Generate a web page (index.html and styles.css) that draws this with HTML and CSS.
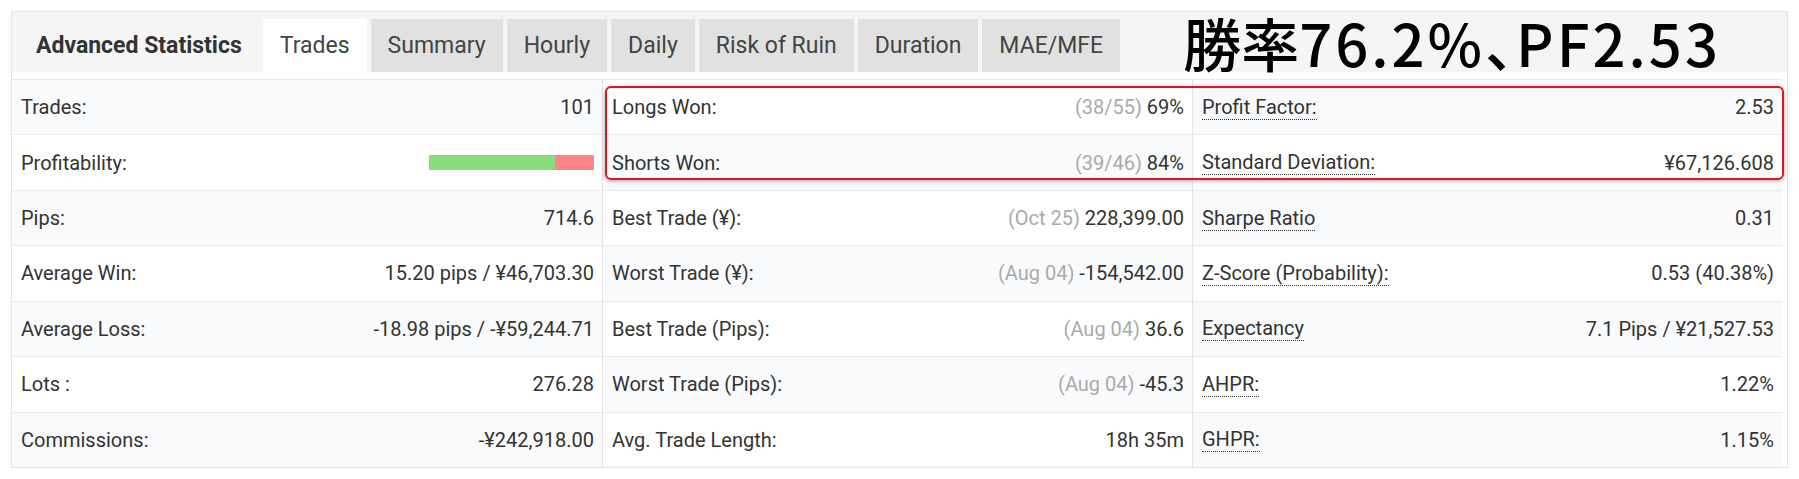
FILE: index.html
```html
<!DOCTYPE html>
<html lang="ja">
<head>
<meta charset="utf-8">
<title>Advanced Statistics</title>
<link rel="stylesheet" href="styles.css">
</head>
<body>
<div class="panel">
  <div class="header">
    <div class="title">Advanced Statistics</div>
    <div class="tabs">
      <div class="tab active">Trades</div>
      <div class="tab">Summary</div>
      <div class="tab">Hourly</div>
      <div class="tab">Daily</div>
      <div class="tab">Risk of Ruin</div>
      <div class="tab">Duration</div>
      <div class="tab">MAE/MFE</div>
    </div>
    <div class="annot">勝率<span class="latin">76.2%</span><span class="punct">、</span><span class="latin">PF2.53</span></div>
  </div>
  <div class="body">
    <div class="col col-a">
      <div class="row"><span class="lbl">Trades:</span><span class="val">101</span></div>
      <div class="row"><span class="lbl">Profitability:</span><span class="bar"><span class="win" style="width:76.2%"></span><span class="loss"></span></span></div>
      <div class="row"><span class="lbl">Pips:</span><span class="val">714.6</span></div>
      <div class="row"><span class="lbl">Average Win:</span><span class="val">15.20 pips / ¥46,703.30</span></div>
      <div class="row"><span class="lbl">Average Loss:</span><span class="val">-18.98 pips / -¥59,244.71</span></div>
      <div class="row"><span class="lbl">Lots :</span><span class="val">276.28</span></div>
      <div class="row"><span class="lbl">Commissions:</span><span class="val">-¥242,918.00</span></div>
    </div>
    <div class="col col-b">
      <div class="row"><span class="lbl">Longs Won:</span><span class="val"><span class="muted">(38/55)</span> 69%</span></div>
      <div class="row"><span class="lbl">Shorts Won:</span><span class="val"><span class="muted">(39/46)</span> 84%</span></div>
      <div class="row"><span class="lbl">Best Trade (¥):</span><span class="val"><span class="muted">(Oct 25)</span> 228,399.00</span></div>
      <div class="row"><span class="lbl">Worst Trade (¥):</span><span class="val"><span class="muted">(Aug 04)</span> -154,542.00</span></div>
      <div class="row"><span class="lbl">Best Trade (Pips):</span><span class="val"><span class="muted">(Aug 04)</span> 36.6</span></div>
      <div class="row"><span class="lbl">Worst Trade (Pips):</span><span class="val"><span class="muted">(Aug 04)</span> -45.3</span></div>
      <div class="row"><span class="lbl">Avg. Trade Length:</span><span class="val">18h 35m</span></div>
    </div>
    <div class="col col-c">
      <div class="row"><span class="lbl dotted">Profit Factor:</span><span class="val">2.53</span></div>
      <div class="row"><span class="lbl dotted">Standard Deviation:</span><span class="val">¥67,126.608</span></div>
      <div class="row"><span class="lbl dotted">Sharpe Ratio</span><span class="val">0.31</span></div>
      <div class="row"><span class="lbl dotted">Z-Score (Probability):</span><span class="val">0.53 (40.38%)</span></div>
      <div class="row"><span class="lbl dotted">Expectancy</span><span class="val">7.1 Pips / ¥21,527.53</span></div>
      <div class="row"><span class="lbl dotted">AHPR:</span><span class="val">1.22%</span></div>
      <div class="row"><span class="lbl dotted">GHPR:</span><span class="val">1.15%</span></div>
    </div>
    <div class="highlight"></div>
  </div>
</div>
</body>
</html>
```
FILE: styles.css
```css
html, body {
  margin: 0;
  padding: 0;
  background: #ffffff;
}

body {
  font-family: Roboto, "Liberation Sans", sans-serif;
  color: #333333;
}

.panel {
  margin: 11px 11px 0 11px;
  border: 1px solid #e4e4e4;
  background: #ffffff;
}

.header {
  display: flex;
  align-items: flex-end;
  height: 60px;
  background: #f5f5f5;
  padding-left: 24px;
}

.title {
  height: 53px;
  line-height: 53px;
  font-size: 23px;
  font-weight: 700;
  color: #333333;
  margin-right: 21px;
  white-space: nowrap;
}

.tabs {
  display: flex;
  gap: 4px;
}

.tab {
  height: 53px;
  line-height: 53px;
  padding: 0 17px;
  font-size: 23px;
  color: #444444;
  background: #e1e1e1;
  white-space: nowrap;
}

.tab.active {
  background: #ffffff;
}

.annot {
  margin-left: auto;
  margin-right: 66px;
  align-self: center;
  font-family: "Noto Sans CJK JP", "Noto Sans", sans-serif;
  font-size: 58px;
  font-weight: 500;
  line-height: 1;
  color: #000000;
  white-space: nowrap;
}

.annot .latin {
  letter-spacing: 3px;
}

.annot .punct {
  font-feature-settings: "halt";
  margin-right: 2px;
}

.body {
  position: relative;
  padding: 7px 5px 0 0;
  display: grid;
  grid-template-columns: 1fr 1fr 1fr;
}

.col + .col {
  border-left: 1px solid #e4e4e4;
}

.row {
  box-sizing: border-box;
  height: 55.43px;
  border-top: 1px solid #e9e9e9;
  display: flex;
  align-items: center;
  justify-content: space-between;
  padding: 0 8px 0 9px;
  font-size: 20px;
  white-space: nowrap;
}

.col-a .row:nth-child(odd),
.col-c .row:nth-child(odd),
.col-b .row:nth-child(even) {
  background: #f9fafc;
}

.muted {
  color: #aaaaaa;
}

.dotted {
  border-bottom: 1px dotted #333333;
}

.bar {
  display: flex;
  width: 165px;
  height: 15px;
}

.bar .win {
  background: #88dd78;
}

.bar .loss {
  flex: 1;
  background: #fd8585;
}

.highlight {
  position: absolute;
  left: 593px;
  top: 14px;
  width: 1179px;
  height: 94px;
  box-sizing: border-box;
  border: 2px solid #e0141c;
  border-radius: 6px;
  box-shadow: 0 1px 4px rgba(0, 0, 0, 0.35);
  pointer-events: none;
}
```
